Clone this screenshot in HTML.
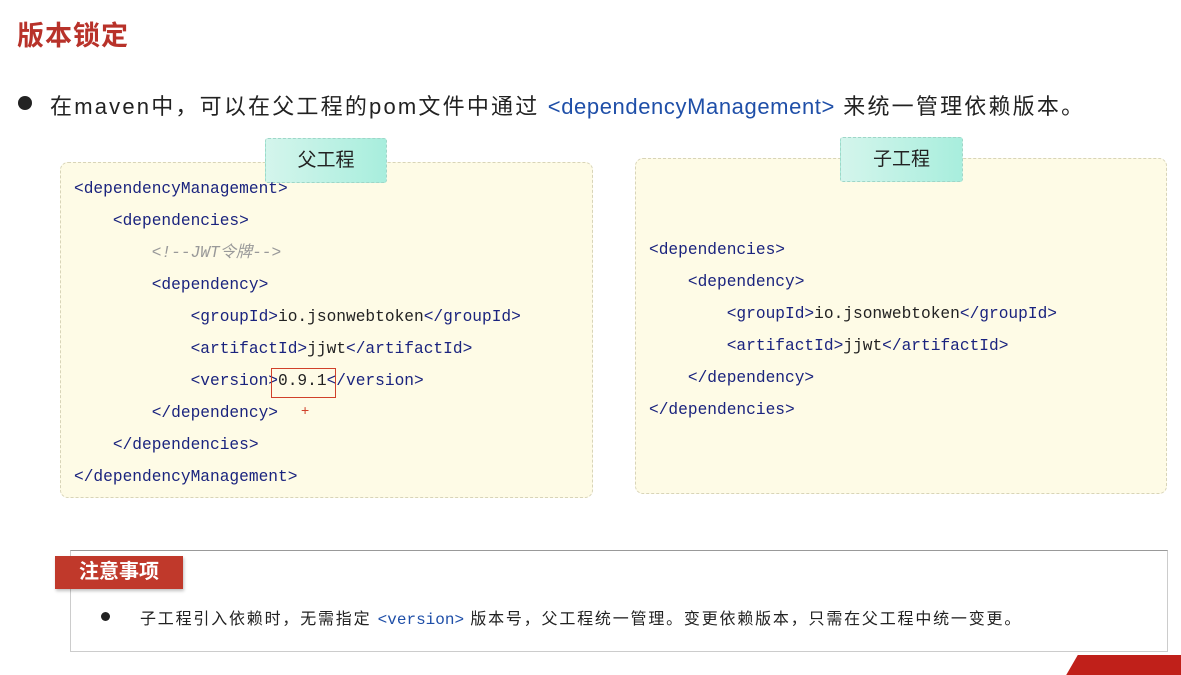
<!DOCTYPE html>
<html><head><meta charset="utf-8"><style>
*{margin:0;padding:0;box-sizing:border-box}
body{width:1181px;height:664px;background:#fff;position:relative;overflow:hidden;font-family:"Liberation Sans","Noto Sans CJK SC",sans-serif;}
.abs{position:absolute}
.title{left:17px;top:14px;font-size:27px;font-weight:bold;color:#b8322a;letter-spacing:1px}
.bl{left:18px;top:96px;width:14px;height:14px;border-radius:50%;background:#222}
.bt{left:50px;top:89px;font-size:22px;letter-spacing:2.2px;color:#222;white-space:nowrap}
.bt span{color:#1f4fa8;letter-spacing:0.6px}
.box{border:1.5px dashed #d8d4b8;background:#fefbe6;border-radius:8px}
.tab{background:linear-gradient(90deg,#d4f5ec,#a8eedd);border:1.5px dashed #9fd6c8;border-radius:3px;font-size:19px;color:#222;text-align:center;line-height:44px}
.code{font-family:"Liberation Mono","Noto Sans CJK SC",monospace;font-size:16.2px;color:#1a237e;white-space:pre;line-height:32px}
.t{color:#222}
.c{color:#999;font-style:italic}
</style></head><body>
<div class="abs title">版本锁定</div>
<div class="abs bl"></div>
<div class="abs bt">在maven中，可以在父工程的pom文件中通过 <span>&lt;dependencyManagement&gt;</span> 来统一管理依赖版本。</div>

<div class="abs box" style="left:60px;top:162px;width:533px;height:336px"></div>
<div class="abs tab" style="left:265px;top:138px;width:122px;height:45px">父工程</div>
<div class="abs code" style="left:74px;top:173px">&lt;dependencyManagement&gt;
    &lt;dependencies&gt;
        <span class="c">&lt;!--JWT令牌--&gt;</span>
        &lt;dependency&gt;
            &lt;groupId&gt;<span class="t">io.jsonwebtoken</span>&lt;/groupId&gt;
            &lt;artifactId&gt;<span class="t">jjwt</span>&lt;/artifactId&gt;
            &lt;version&gt;<span class="t">0.9.1</span>&lt;/version&gt;
        &lt;/dependency&gt;
    &lt;/dependencies&gt;
&lt;/dependencyManagement&gt;</div>
<div class="abs" style="left:271px;top:368px;width:65px;height:30px;border:1.5px solid #d0402a"></div>
<div class="abs" style="left:301px;top:402px;color:#d0402a;font-size:14px">+</div>

<div class="abs box" style="left:635px;top:158px;width:532px;height:336px"></div>
<div class="abs tab" style="left:840px;top:137px;width:123px;height:45px">子工程</div>
<div class="abs code" style="left:649px;top:234px">&lt;dependencies&gt;
    &lt;dependency&gt;
        &lt;groupId&gt;<span class="t">io.jsonwebtoken</span>&lt;/groupId&gt;
        &lt;artifactId&gt;<span class="t">jjwt</span>&lt;/artifactId&gt;
    &lt;/dependency&gt;
&lt;/dependencies&gt;</div>

<div class="abs" style="left:70px;top:550px;width:1098px;height:102px;border:1.5px solid #ccc;border-top-color:#999;background:#fff"></div>
<div class="abs" style="left:55px;top:556px;width:128px;height:33px;background:#c0392b;color:#fff;font-size:20px;font-weight:bold;line-height:33px;text-align:center;box-shadow:1px 2px 3px rgba(0,0,0,.25)">注意事项</div>
<div class="abs" style="left:101px;top:612px;width:9px;height:9px;border-radius:50%;background:#222"></div>
<div class="abs" style="left:140px;top:605px;font-size:16px;letter-spacing:1.8px;color:#222;white-space:nowrap">子工程引入依赖时，无需指定 <span style="font-family:'Liberation Mono',monospace;color:#1f4fa8;letter-spacing:0">&lt;version&gt;</span> 版本号，父工程统一管理。变更依赖版本，只需在父工程中统一变更。</div>
<div class="abs" style="left:1072px;top:655px;width:120px;height:20px;background:#c0201a;transform:skewX(-30deg)"></div>
</body></html>
